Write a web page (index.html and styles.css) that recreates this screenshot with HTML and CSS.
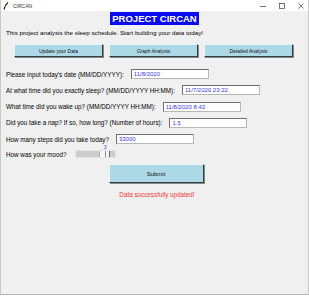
FILE: index.html
```html
<!DOCTYPE html>
<html>
<head>
  <title>CIRCAN</title>
  <link rel="stylesheet" href="styles.css">
</head>
<body>
  <div class="window">
    <div class="titlebar">
      <svg class="app-icon" width="6" height="8" viewBox="0 0 6 8">
        <path d="M5 0.5 C3 2 1.8 4 1 7.5" stroke="#222" stroke-width="1.2" fill="none"/>
      </svg>
      <span class="app-name">CIRCAN</span>
      <div class="controls">
        <svg width="8" height="8" viewBox="0 0 8 8"><path d="M1 4.5 H7" stroke="#555" stroke-width="0.8"/></svg>
        <svg width="8" height="8" viewBox="0 0 8 8"><rect x="1.5" y="1.5" width="5" height="5" stroke="#555" stroke-width="0.8" fill="none"/></svg>
        <svg width="8" height="8" viewBox="0 0 8 8"><path d="M1.5 1.5 L6.5 6.5 M6.5 1.5 L1.5 6.5" stroke="#555" stroke-width="0.8"/></svg>
      </div>
    </div>

    <div class="content">
      <div class="heading"><span>PROJECT CIRCAN</span></div>
      <p class="intro">This project analysis the sleep schedule. Start building your data today!</p>

      <div class="nav">
        <button class="tk-btn nav-btn">Update your Data</button>
        <button class="tk-btn nav-btn">Graph Analysis</button>
        <button class="tk-btn nav-btn">Detailed Analysis</button>
      </div>

      <div class="form">
        <div class="form-row">
          <label>Please input today's date (MM/DD/YYYY):</label>
          <div class="entry">11/8/2020</div>
        </div>
        <div class="form-row">
          <label>At what time did you exactly sleep? (MM/DD/YYYY HH:MM):</label>
          <div class="entry">11/7/2020 23:22</div>
        </div>
        <div class="form-row">
          <label>What time did you wake up? (MM/DD/YYYY HH:MM):</label>
          <div class="entry">11/8/2020 8:42</div>
        </div>
        <div class="form-row">
          <label>Did you take a nap? If so, how long? (Number of hours):</label>
          <div class="entry">1.5</div>
        </div>
        <div class="form-row">
          <label>How many steps did you take today?</label>
          <div class="entry">33000</div>
        </div>
        <div class="form-row mood-row">
          <label>How was your mood?</label>
          <div class="scale">
            <div class="scale-value">3</div>
            <div class="trough">
              <div class="thumb"></div>
            </div>
          </div>
        </div>
      </div>

      <div class="submit-wrap">
        <button class="tk-btn submit-btn">Submit</button>
      </div>
      <p class="status">Data successfully updated!</p>
    </div>
  </div>
</body>
</html>
```

FILE: styles.css
```css
body {
  margin: 0;
  background: #ffffff;
  font-family: "Liberation Sans", Arial, sans-serif;
}

/* Window frame */
.window {
  width: 309px;
  height: 295px;
  box-sizing: border-box;
  border-left: 1px solid #c9c9c9;
  border-right: 1px solid #c9c9c9;
  border-bottom: 1px solid #b5b5b5;
  display: flex;
  flex-direction: column;
}

.titlebar {
  height: 11px;
  background: #ffffff;
  display: flex;
  align-items: center;
  padding-left: 2px;
}

.app-icon {
  margin-right: 4px;
}

.app-name {
  font-size: 5px;
  color: #333;
}

.controls {
  margin-left: auto;
  display: flex;
  gap: 11px;
  padding-right: 3px;
}

.content {
  flex: 1;
  background: #f0f0f0;
  padding-top: 1px;
}

/* Header */
.heading {
  display: flex;
  justify-content: center;
}

.heading span {
  background: #0a0af0;
  color: #ffffff;
  font-weight: bold;
  font-size: 9.5px;
  line-height: 13px;
  padding: 0 2px;
}

.intro {
  margin: 3px 0 0;
  padding-left: 5px;
  font-size: 6.25px;
  line-height: 10px;
  color: #000;
}

/* Buttons */
.tk-btn {
  background: #add8e6;
  border: 1px solid #e8f4f8;
  border-right-color: #3c3c3c;
  border-bottom-color: #3c3c3c;
  box-shadow: 1px 1px 0 #7a8a90;
  color: #111;
  font-family: "Liberation Sans", Arial, sans-serif;
  padding: 0;
}

.nav {
  display: flex;
  justify-content: center;
  gap: 6px;
  margin-top: 6px;
  padding-right: 2px;
}

.nav-btn {
  width: 89px;
  height: 13px;
  font-size: 5px;
}

/* Form */
.form {
  margin-top: 12px;
  padding-left: 5px;
}

.form-row {
  display: flex;
  align-items: center;
  height: 10px;
  margin-bottom: 6.25px;
}

.form-row label {
  font-size: 6.3px;
  color: #000;
  white-space: nowrap;
}

.entry {
  width: 74px;
  height: 8px;
  margin-left: 7px;
  background: #ffffff;
  border: 1px solid #b8b8b8;
  border-top-color: #6e6e6e;
  border-left-color: #6e6e6e;
  color: #3a3ae6;
  font-size: 6px;
  line-height: 8px;
  padding-left: 2px;
}

.mood-row {
  margin-top: -1px;
  margin-bottom: 0;
}

.scale {
  margin-left: 8px;
  display: flex;
  flex-direction: column;
  align-items: flex-end;
}

.scale-value {
  height: 6px;
  margin-top: -6px;
  margin-right: 9px;
  font-size: 5px;
  line-height: 6px;
  color: #3a3ae6;
}

.trough {
  width: 41px;
  height: 8px;
  box-sizing: border-box;
  background: #cdcdcd;
  border: 1px solid #e4e4e4;
  display: flex;
  justify-content: flex-end;
  padding-right: 5px;
}

.thumb {
  width: 11px;
  height: 6px;
  box-sizing: border-box;
  background: linear-gradient(to right, #f7f7f7 0 5px, #8a8a8a 5px 6px, #f7f7f7 6px);
  border-left: 1px solid #b0b0b0;
  border-right: 1px solid #6a6a6a;
}

/* Submit */
.submit-wrap {
  display: flex;
  justify-content: center;
  margin-top: 5px;
  padding-left: 3px;
}

.submit-btn {
  width: 95px;
  height: 19px;
  font-size: 6px;
}

.status {
  margin: 7px 0 0;
  text-align: center;
  color: #f03a3a;
  font-size: 6.3px;
  line-height: 10px;
  padding-left: 5px;
}
```
